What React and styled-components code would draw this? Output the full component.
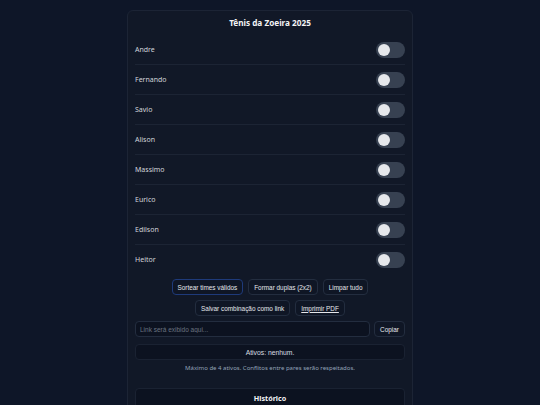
import React, { useState } from "react";
import styled, { createGlobalStyle } from "styled-components";

const GlobalStyle = createGlobalStyle`
  html, body {
    margin: 0;
    padding: 0;
    background: #0e1628;
  }
  body {
    font-family: "Noto Sans", "Open Sans", sans-serif;
    color: #e5e7eb;
  }
`;

const Page = styled.div`
  display: flex;
  justify-content: center;
  padding-top: 10px;
  min-height: 405px;
  box-sizing: border-box;
`;

const Card = styled.div`
  width: 286px;
  box-sizing: border-box;
  background: #111827;
  border: 1px solid #1c2435;
  border-radius: 6px;
  padding: 7px 7px 20px;
  display: flex;
  flex-direction: column;
`;

const Title = styled.h1`
  margin: 0 0 7px;
  font-size: 8.2px;
  line-height: 10px;
  font-weight: 700;
  text-align: center;
  color: #f3f4f6;
`;

const List = styled.div`
  display: flex;
  flex-direction: column;
`;

const Row = styled.div`
  height: 30px;
  box-sizing: border-box;
  display: flex;
  align-items: center;
  justify-content: space-between;
  border-bottom: 1px solid ${({ $last }) => ($last ? "transparent" : "#1c2434")};
`;

const Name = styled.span`
  font-size: 7px;
  color: #d1d5db;
`;

const Switch = styled.button`
  width: 29px;
  height: 16px;
  border: none;
  border-radius: 8px;
  padding: 0 2px;
  background: ${({ $on }) => ($on ? "#2563eb" : "#374151")};
  display: flex;
  align-items: center;
  justify-content: ${({ $on }) => ($on ? "flex-end" : "flex-start")};
  cursor: pointer;
`;

const Knob = styled.span`
  width: 12px;
  height: 12px;
  border-radius: 50%;
  background: #e5e7eb;
`;

const Actions = styled.div`
  margin-top: 4px;
  display: flex;
  flex-wrap: wrap;
  justify-content: center;
  gap: 5px;
  padding: 0 30px;
`;

const Button = styled.button`
  height: 16px;
  padding: 0 5px;
  box-sizing: border-box;
  background: #0f1625;
  border: 1px solid ${({ $primary }) => ($primary ? "#1e3a7a" : "#232d3f")};
  border-radius: 4px;
  font-family: "Liberation Sans", Arial, sans-serif;
  font-size: 6.4px;
  color: #e5e7eb;
  text-decoration: ${({ $link }) => ($link ? "underline" : "none")};
  cursor: pointer;
  white-space: nowrap;
`;

const LinkRow = styled.div`
  margin-top: 5px;
  display: flex;
  gap: 4px;
`;

const LinkInput = styled.input`
  flex: 1;
  height: 16px;
  box-sizing: border-box;
  background: #0c1220;
  border: 1px solid #232d3f;
  border-radius: 4px;
  padding: 0 4px;
  font-family: "Liberation Sans", Arial, sans-serif;
  font-size: 6.5px;
  color: #e5e7eb;
  outline: none;
  &::placeholder {
    color: #6b7280;
  }
`;

const CopyButton = styled(Button)`
  width: 31px;
  padding: 0;
`;

const Status = styled.div`
  margin-top: 7px;
  height: 16px;
  box-sizing: border-box;
  background: #0c1220;
  border: 1px solid #1a2232;
  border-radius: 4px;
  display: flex;
  align-items: center;
  justify-content: center;
  font-family: "Liberation Sans", Arial, sans-serif;
  font-size: 6.8px;
  color: #d9dde3;
`;

const Hint = styled.p`
  margin: 4px 0 0;
  font-size: 6px;
  line-height: 8px;
  text-align: center;
  color: #94a3b8;
`;

const History = styled.section`
  margin-top: 16px;
  background: #0c1220;
  border: 1px solid #1a2232;
  border-radius: 4px;
  padding: 4px 0 20px;
`;

const HistoryTitle = styled.h2`
  margin: 0;
  font-size: 7.2px;
  line-height: 10px;
  font-weight: 700;
  text-align: center;
  color: #f3f4f6;
`;

const players = ["Andre", "Fernando", "Savio", "Alison", "Massimo", "Eurico", "Edilson", "Heitor"];

export default function App() {
  const [active, setActive] = useState({});

  const toggle = (name) => setActive((a) => ({ ...a, [name]: !a[name] }));
  const names = players.filter((p) => active[p]);

  return (
    <>
      <GlobalStyle />
      <Page>
        <Card>
          <Title>Tênis da Zoeira 2025</Title>
          <List>
            {players.map((p, i) => (
              <Row key={p} $last={i === players.length - 1}>
                <Name>{p}</Name>
                <Switch $on={!!active[p]} onClick={() => toggle(p)}>
                  <Knob />
                </Switch>
              </Row>
            ))}
          </List>
          <Actions>
            <Button $primary>Sortear times válidos</Button>
            <Button>Formar duplas (2x2)</Button>
            <Button onClick={() => setActive({})}>Limpar tudo</Button>
            <Button>Salvar combinação como link</Button>
            <Button $link>Imprimir PDF</Button>
          </Actions>
          <LinkRow>
            <LinkInput placeholder="Link será exibido aqui..." readOnly />
            <CopyButton>Copiar</CopyButton>
          </LinkRow>
          <Status>Ativos: {names.length ? names.join(", ") : "nenhum."}</Status>
          <Hint>Máximo de 4 ativos. Conflitos entre pares serão respeitados.</Hint>
          <History>
            <HistoryTitle>Histórico</HistoryTitle>
          </History>
        </Card>
      </Page>
    </>
  );
}
